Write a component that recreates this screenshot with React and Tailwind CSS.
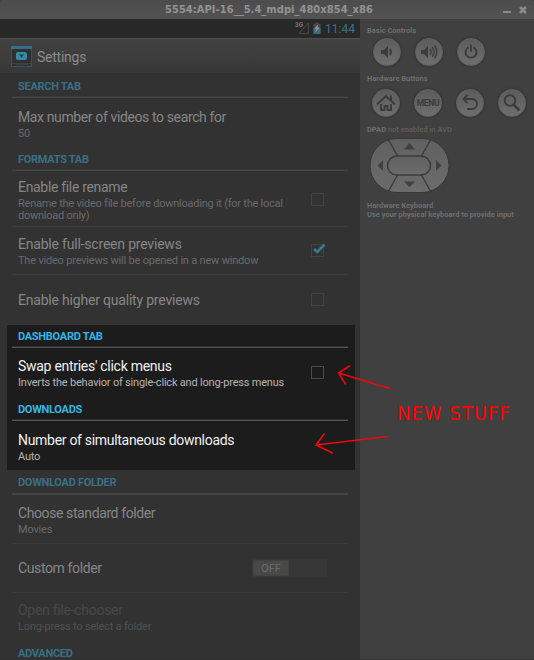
import React from "react";

function Header({ children, className = "", active = false }) {
  return (
    <div
      className={`ml-3 w-[336px] h-6 shrink-0 border-b pl-[6px] pt-[5px] text-[11px] leading-[16px] font-bold tracking-[-0.28px] whitespace-nowrap ${
        active ? "border-b-[#555555] shadow-[inset_0_-1px_0_#303030] text-[#33b5e5]" : "border-b-[#454545] shadow-[inset_0_-1px_0_#3a3a3a] text-[#396f84]"
      } ${className}`}
    >
      {children}
    </div>
  );
}

function Check({ on = false, active = false, className = "" }) {
  return (
    <div className={`relative size-[13px] shrink-0 border ${active ? "border-[#4b4b4b]" : "border-[#434343]"} ${className}`}>
      {on && (
        <svg className="absolute -left-px -top-[3px]" width="16" height="14" viewBox="0 0 16 14" fill="none">
          <path d="M3 7 6.2 10 13.500 2.500" stroke="#3a7b94" strokeWidth="2.600" />
        </svg>
      )}
    </div>
  );
}

function Row({ title, sub, className = "", titleClass = "text-[#868686]", subClass = "text-[#6a6a6a]", track = "tracking-[-0.28px]", line = false, children }) {
  return (
    <div className={`ml-3 w-[336px] shrink-0 flex pl-[6px] ${line ? "border-b border-[#3c3c3c]" : ""} ${className}`}>
      <div className="flex-1 whitespace-nowrap">
        <div className={`text-[14px] leading-[18px] ${track} ${titleClass}`}>{title}</div>
        {sub && <div className={`text-[11px] leading-[12px] mt-[2px] tracking-[-0.2px] ${subClass}`}>{sub}</div>}
      </div>
      {children}
    </div>
  );
}

function Round({ children }) {
  return (
    <div className="size-7 shrink-0 rounded-full bg-linear-to-b from-[#5c5c5c] to-[#6e6e6e] border border-[#626262] shadow-[0_0_2px_1px_#363636] flex items-center justify-center text-[#3b3b3b]">
      {children}
    </div>
  );
}

function Svg({ children, size = 20 }) {
  return (
    <svg width={size} height={size} viewBox="0 0 20 20" fill="none" stroke="currentColor" strokeWidth="1.800" className="shrink-0">
      {children}
    </svg>
  );
}

function Phone() {
  return (
    <div className="w-[360px] h-[641px] shrink-0 bg-[#323232] flex flex-col overflow-hidden font-[Roboto,sans-serif]">
      <div className="h-[19px] shrink-0 bg-[#282828] flex justify-end items-center pr-[5px]">
        <svg width="28" height="14" viewBox="0 0 28 14" className="mr-[3px] -mt-px">
          <path d="M4 12.500H13.500V2Z" fill="none" stroke="#4a4a4a" />
          <path d="M18.500 3h2V1.500h3V3h2v10h-7z" fill="#434d51" />
          <path d="M18.500 7h7v6h-7z" fill="#3a6f83" />
          <path d="M23 3.500l-3.500 4h2l-1 3.500 4-4.500h-2z" fill="#999" />
          <text x="0" y="6" fontSize="6.500" fontWeight="bold" fill="#777" fontFamily="Roboto" textLength="8" lengthAdjust="spacingAndGlyphs">3G</text>
        </svg>
        <span className="text-[12px] leading-[19px] w-[29px] mt-px flex justify-end whitespace-nowrap text-[#3a7489]">11:44</span>
      </div>
      <div className="h-[35px] shrink-0 border-t border-[#4d4d4d] bg-linear-to-b from-[#424242] to-[#373737] flex items-center pl-[11px]">
        <svg width="21" height="21" viewBox="0 0 21 21">
          <rect x=".5" y=".5" width="20" height="20" fill="#303030" stroke="#345460" />
          <path d="M0 0h21v3H0z" fill="#326f88" />
          <path d="M1 17.500h19M5 18.500h12" stroke="#3f3f3f" />
          <rect x="5" y="6" width="11" height="8" rx="2" fill="#378aa8" />
          <path d="M8 8.500h5L10.500 12z" fill="#293f47" />
        </svg>
        <span className="ml-[5px] mt-[2px] text-[14px] tracking-[-0.25px] text-[#8b8b8b]">Settings</span>
      </div>
      <Header className="mt-px">SEARCH TAB</Header>
      <Row title="Max number of videos to search for" sub="50" className="h-[49px] pt-[10px]" track="tracking-[-0.38px]" />
      <Header>FORMATS TAB</Header>
      <Row title="Enable file rename" sub={<span className="tracking-[-0.24px]">Rename the video file before downloading it (for the local<br />download only)</span>} className="h-14 pt-[7px]" track="tracking-[-0.32px]" line>
        <Check className="mt-[15px] mr-6" />
      </Row>
      <Row title="Enable full-screen previews" sub="The video previews will be opened in a new window" className="h-12 pt-2" track="tracking-[-0.2px]" line>
        <Check on className="mt-[9px] mr-6" />
      </Row>
      <Row title="Enable higher quality previews" className="h-[50px] pt-4" track="tracking-[-0.2px]">
        <Check className="mt-[2px] mr-6" />
      </Row>
      <div className="ml-[7px] w-[348px] h-[145px] shrink-0 bg-[#1c1c1c]">
        <div className="-ml-[7px]">
          <Header active className="h-[23px]! pt-1!">DASHBOARD TAB</Header>
          <Row title="Swap entries' click menus" sub="Inverts the behavior of single-click and long-press menus" className="h-[49px] pt-[9px]" titleClass="text-[#f0f0f0]" subClass="text-[#b4b4b4]">
            <Check active className="mt-[9px] mr-6" />
          </Row>
          <Header active>DOWNLOADS</Header>
          <Row title="Number of simultaneous downloads" sub="Auto" className="h-[49px] pt-[10px]" track="tracking-[-0.3px]" titleClass="text-[#f0f0f0]" subClass="text-[#b4b4b4]" />
        </div>
      </div>
      <Header className="h-[25px]! border-b-2! pt-[5px]! shadow-none!">DOWNLOAD FOLDER</Header>
      <Row title="Choose standard folder" sub="Movies" className="h-[49px] pt-[9px]" track="tracking-[-0.4px]" line />
      <Row title="Custom folder" className="h-[49px] pt-[15px]" track="tracking-[-0.38px]" line>
        <div className="mr-[21px] w-[75px] h-[18px] bg-[#373737] p-px">
          <div className="w-9 h-4 bg-[#484848] border border-[#424242] text-[11px] leading-[15px] text-center text-[#6b6b6b]">OFF</div>
        </div>
      </Row>
      <Row title="Open file-chooser" sub="Long-press to select a folder" className="h-[49px] pt-2" titleClass="text-[#484848]" subClass="text-[#505050]" />
      <Header className="border-0 pt-1! shadow-none!">ADVANCED</Header>
    </div>
  );
}

function Controls() {
  return (
    <div className="w-[174px] h-[641px] bg-[#404040] pl-[7px] pt-[7px] font-[Roboto,sans-serif] font-bold text-[7.5px] leading-[9px] text-[#6e6e6e] whitespace-nowrap">
      <div>Basic Controls</div>
      <div className="mt-[3px] ml-[5.5px] flex gap-[14px]">
        <Round>
          <Svg>
            <path d="M4 8h3l4-4v12l-4-4H4z" fill="currentColor" stroke="none" />
            <path d="M13 7q2 3 0 6" />
          </Svg>
        </Round>
        <Round>
          <Svg>
            <path d="M2 8h3l4-4v12l-4-4H2z" fill="currentColor" stroke="none" />
            <path d="M11 7q2 3 0 6M13.200 5.200q3.400 4.800 0 9.600M15.500 3.500q4.600 6.500 0 13" strokeWidth="1.400" />
          </Svg>
        </Round>
        <Round>
          <Svg>
            <path d="M7.500 5.300a5.500 5.500 0 1 0 5 0M10 2.500v7" />
          </Svg>
        </Round>
      </div>
      <div className="mt-2">Hardware Buttons</div>
      <div className="mt-[6px] ml-[5px] flex gap-[14px]">
        <Round>
          <Svg>
            <path d="M1 11.500 10 3l9 8.500M5 11V17h3.500v-4h3v4H15V11M15 7v-4.500" />
          </Svg>
        </Round>
        <Round>
          <span className="text-[8.5px] tracking-[-0.3px]">MENU</span>
        </Round>
        <Round>
          <Svg>
            <path d="M7.500 2 3.500 6l4 4M3.500 6H12a5 5 0 0 1 0 10H7" />
          </Svg>
        </Round>
        <Round>
          <Svg>
            <circle cx="8" cy="7.500" r="5.300" />
            <path d="M11.500 11.500 17.500 17.500" strokeWidth="2.500" />
          </Svg>
        </Round>
      </div>
      <div className="mt-2 text-[#5b5b5b]"><span className="text-[#6e6e6e]">DPAD</span> not enabled in AVD</div>
      <svg width="82" height="58" viewBox="0 0 82 58" className="mt-[3px] ml-[2px] block">
        <defs>
          <linearGradient id="pad" x1="0" y1="0" x2="0" y2="1">
            <stop offset="0" stopColor="#606060" />
            <stop offset="1" stopColor="#6c6c6c" />
          </linearGradient>
        </defs>
        <rect x="1" y="1.500" width="79" height="54" rx="27" fill="url(#pad)" stroke="#383838" />
        <path d="M19 2 28.500 19M62 2 52.500 19M19 55 28.500 38M62 55 52.500 38" stroke="#3b3b3b" strokeWidth="1.400" />
        <rect x="18.500" y="19" width="43" height="19" rx="9.500" fill="url(#pad)" stroke="#3b3b3b" strokeWidth="1.500" />
        <path d="M35 12.500h11L40.500 6zM35 44.500h11L40.500 50zM14 23v11L8.500 28.500zM67 23v11l5.500-5.500z" fill="#404040" />
      </svg>
      <div className="mt-[6px]">Hardware Keyboard</div>
      <div>Use your physical keyboard to provide input</div>
    </div>
  );
}

export default function App() {
  return (
    <div className="relative w-[534px] h-[660px] overflow-hidden bg-[#404040]">
      <div className="h-[19px] bg-linear-to-b from-[#4c4c4c] to-[#535353] flex items-center rounded-t-[3px]">
        <div className="pl-[165px] w-[503px] text-[11px] leading-[18px] tracking-[0.06px] font-bold font-['DejaVu_Sans_Condensed','DejaVu_Sans',sans-serif] [font-stretch:condensed] text-[#939393] whitespace-nowrap">5554:API-16__5.4_mdpi_480x854_x86</div>
        <div className="mt-[5px] w-2 h-[2px] bg-[#8b8b8b]" />
        <svg width="8" height="8" viewBox="0 0 8 8" className="ml-2 mt-px">
          <path d="M1 1 7 7M7 1 1 7" stroke="#8b8b8b" strokeWidth="2.500" />
        </svg>
      </div>
      <div className="flex">
        <Phone />
        <Controls />
      </div>
      <svg className="absolute left-0 top-0" width="534" height="660" viewBox="0 0 534 660" fill="none" stroke="#ee0808" strokeWidth="1.600" strokeLinecap="round">
        <path d="M390 388.500 338.500 373M349.500 366 338.500 373l7 11M387 436.500 316 445M324 434l-8 11 16.500 8" />
      </svg>
      <div className="absolute left-[397px] top-[401px] text-[20px] leading-6 tracking-[1px] whitespace-nowrap text-[#f00] font-['DejaVu_Sans_Condensed','DejaVu_Sans',sans-serif] [font-stretch:condensed]">NEW STUFF</div>
      <div className="absolute left-0 bottom-0 w-full h-px bg-[#303030]" />
    </div>
  );
}
